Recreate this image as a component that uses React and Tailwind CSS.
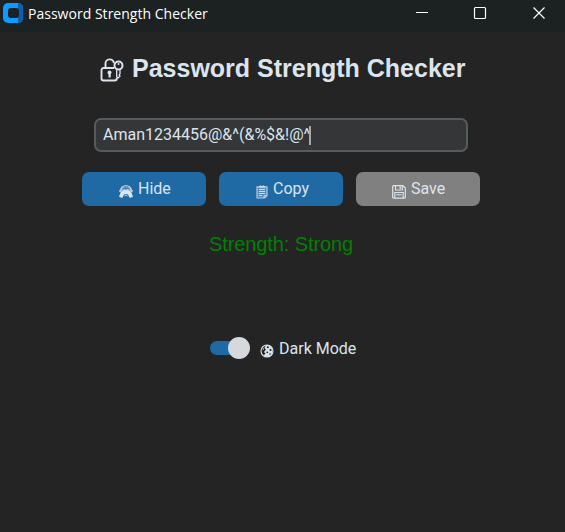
import React from "react";

function AppLogo() {
  return (
    <svg width="20" height="20" viewBox="0 0 20 20">
      <rect width="20" height="20" rx="5" fill="#0d9bff" />
      <path d="M15 0a5 5 0 0 1 5 5v10a5 5 0 0 1-5 5z" fill="#0760b3" />
      <rect x="5" y="5" width="11" height="10" rx="3" fill="#1c2122" />
    </svg>
  );
}

function LockKeyIcon() {
  return (
    <svg width="24" height="24" viewBox="0 0 24 24" fill="none" stroke="#dce4ee" strokeWidth="1.9">
      <path d="M5.500 10V6a4.200 4.200 0 0 1 8.400-.8" />
      <path d="M14 10H3.500a2 2 0 0 0-2 2v8.500a2 2 0 0 0 2 2h11.300a2 2 0 0 0 2-2V19.500" />
      <circle cx="18.500" cy="7.500" r="4" strokeWidth="2" />
      <circle cx="18.500" cy="6" r="1" fill="#dce4ee" stroke="none" />
      <path d="M16.700 10.500v8.300l1.500 1.200 1.800-1.800-.9-1.200.9-1.200V11" strokeWidth="1.300" />
      <circle cx="9.500" cy="14.500" r="2" fill="#dce4ee" stroke="none" />
      <path d="M9.600 15v4.500" strokeWidth="2.200" />
    </svg>
  );
}

function MonkeyIcon() {
  return (
    <svg width="14" height="13" viewBox="0 0 14 13">
      <path d="M1.600 6.500C1.600 2.600 4 .7 7 .7s5.400 1.900 5.400 5.800" fill="#7da9d0" stroke="#dce4ee" strokeWidth="1.100" />
      <path d="M3.500 3.300h7M4.800 1.900h4.400" stroke="#1f6aa5" strokeWidth=".7" />
      <circle cx="1.300" cy="6" r="1.200" fill="#b6cde4" />
      <circle cx="12.700" cy="6" r="1.200" fill="#b6cde4" />
      <path d="M5.500 4.400 7 5.600l1.500-1.200 3.700 2.700 1.800 4.600-3.200 1.200L8.800 9.200H5.200l-2 3.700L0 11.700l1.800-4.600z" fill="#dce4ee" />
      <path d="M5.300 11Q7 9.500 8.700 11" fill="none" stroke="#b6cde4" strokeWidth=".9" />
    </svg>
  );
}

function ClipboardIcon() {
  return (
    <svg width="12" height="14" viewBox="0 0 12 14" fill="none">
      <path d="M1 1.800h10v8.900L8.700 13H1z" fill="#5589b6" stroke="#b5c9de" strokeWidth="1.200" />
      <path d="M3 4.500h6M3 6.500h6M3 8.500h6M3 10.500h3" stroke="#dce4ee" strokeWidth=".9" />
      <path d="M3 1.800h6M4.500.6v2M7.500.6v2" stroke="#dce4ee" strokeWidth="1.200" />
      <path d="M8 13v-2.300h2.700" stroke="#dce4ee" strokeWidth=".8" />
    </svg>
  );
}

function FloppyIcon() {
  return (
    <svg width="14" height="14" viewBox="0 0 14 14" fill="none" stroke="#dce4ee">
      <path d="M1.500.700h9.300l2.500 2.400v9.100a1 1 0 0 1-1 1H1.700a1 1 0 0 1-1-1V1.500a.8.800 0 0 1 .8-.8z" strokeWidth="1.200" />
      <path d="M3.500 1v4h6.800V1M2.800 13V7.500h8.400V13M4.300 9.700h5.400" strokeWidth="1.100" />
      <path d="M8.300 1.500v2.200" strokeWidth="1.600" />
    </svg>
  );
}

function MoonIcon() {
  return (
    <svg width="14" height="14" viewBox="0 0 14 14">
      <circle cx="7" cy="7" r="6" fill="#242424" stroke="#dce4ee" strokeWidth="1.100" />
      <path d="M6 1a6 6 0 0 1 1 12c-2 0-3-1-3-2l1.500-1.500L4 8l2-2.500L4.500 4z" fill="#dce4ee" />
      <g fill="#242424">
        <circle cx="7.800" cy="3.300" r="1" />
        <circle cx="10.500" cy="6" r="1.100" />
        <circle cx="7.300" cy="8.300" r=".9" />
        <circle cx="10" cy="10" r=".8" />
      </g>
      <circle cx="3.300" cy="5" r=".8" fill="#dce4ee" />
    </svg>
  );
}

function TitleBar() {
  return (
    <header className="flex h-8 items-start bg-[#1c2122] text-white">
      <div className="pt-[3px] pl-[3px]"><AppLogo /></div>
      <span className="ml-[5px] pt-[3px] font-['Open_Sans',sans-serif] text-[14px] leading-[21px] tracking-[0.02px] whitespace-nowrap">Password Strength Checker</span>
      <svg className="ml-auto" width="165" height="32" viewBox="0 0 165 32" fill="none" stroke="#fff">
        <path d="M16 12.500h12" />
        <rect x="74.500" y="7.500" width="11" height="11" rx="1" strokeWidth="1.200" />
        <path d="m133.500 7.500 11 11m0-11-11 11" strokeWidth="1.200" />
      </svg>
    </header>
  );
}

function ActionButton({ icon, label, className }) {
  return (
    <button className={`flex h-[34px] w-[124px] items-center rounded-[7px] ${className}`}>
      <span className="mt-[5px] shrink-0">{icon}</span>
      <span className="ml-[5px] text-[16px] leading-[20px]">{label}</span>
    </button>
  );
}

export default function App() {
  return (
    <div className="flex h-[532px] w-[565px] flex-col overflow-hidden bg-[#242424] font-[Roboto,sans-serif] text-[#dce4ee]">
      <TitleBar />
      <main className="flex flex-col">
        <div className="mt-[20px] flex h-8 items-center pl-[100px]">
          <div className="mt-[3px]"><LockKeyIcon /></div>
          <h1 className="ml-[8px] font-['Liberation_Sans',sans-serif] text-[25px] leading-8 font-bold whitespace-nowrap">Password Strength Checker</h1>
        </div>
        <div className="mt-[34px] ml-[94px] flex h-[34px] w-[374px] items-center rounded-[7px] border-2 border-[#565b5e] bg-[#343638] pl-[7px]">
          <span className="text-[16px] leading-5">Aman1234456@&^(&%$&!@^</span>
          <span className="-ml-px h-[19px] w-[2px] bg-[#a5a9ad]" />
        </div>
        <div className="mt-5 ml-[82px] flex gap-[13px]">
          <ActionButton icon={<MonkeyIcon />} label="Hide" className="bg-[#1f6aa5] pl-[37px]" />
          <ActionButton icon={<ClipboardIcon />} label="Copy" className="bg-[#1f6aa5] pl-[37px]" />
          <ActionButton icon={<FloppyIcon />} label="Save" className="bg-[#808080] pl-[36px]" />
        </div>
        <p className="mt-[26px] pl-[209px] font-['Liberation_Sans',sans-serif] text-[20px] leading-6 tracking-[-0.1px] text-[#008000]">Strength: Strong</p>
        <div className="mt-[80px] flex h-6 items-center pl-[210px]">
          <div className="flex h-[14px] w-10 items-center justify-end rounded-full bg-[linear-gradient(to_right,#1f6aa5_75%,transparent_75%)]">
            <span className="size-[22px] shrink-0 rounded-full bg-[#d5d9de]" />
          </div>
          <span className="mt-[5px] ml-[10px]"><MoonIcon /></span>
          <span className="mt-[2px] ml-[5px] text-[16px] leading-5">Dark Mode</span>
        </div>
      </main>
    </div>
  );
}
